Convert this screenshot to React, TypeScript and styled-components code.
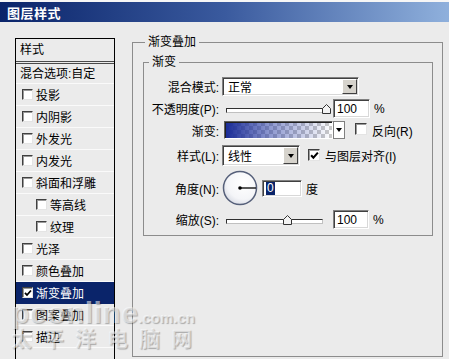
import React from 'react';
import styled, { createGlobalStyle } from 'styled-components';

const GlobalStyle = createGlobalStyle`
  html, body {
    margin: 0;
    padding: 0;
  }
  body {
    background: #ebebeb;
    font-family: "Liberation Sans", "Noto Sans CJK SC", sans-serif;
    font-size: 12px;
    color: #000;
    overflow: hidden;
  }
`;

const Window = styled.div`
  position: relative;
  width: 449px;
  height: 359px;
  box-sizing: border-box;
  background: #ebebeb;
  border-top: 2px solid #f6f6f6;
  overflow: hidden;
`;

const TitleBar = styled.div`
  height: 20px;
  display: flex;
  align-items: center;
  padding-left: 7px;
  background: linear-gradient(90deg, #0a246a 0%, #3a5a9e 50%, #8fb0dc 100%);
  color: #fff;
  font-weight: bold;
  font-size: 13px;
  letter-spacing: 0.5px;
`;

const Body = styled.div`
  display: flex;
  align-items: flex-start;
  gap: 17px;
  padding: 13px 6px 0 15px;
`;

const StyleList = styled.div`
  width: 100px;
  height: 330px;
  margin-top: 3px;
  box-sizing: border-box;
  border: 1px solid #000;
  border-bottom: none;
  flex-shrink: 0;
`;

const ListHeader = styled.div`
  height: 22px;
  line-height: 22px;
  padding-left: 4px;
  border-bottom: 3px double #4a4a4a;
`;

const BlendRow = styled.div`
  height: 20px;
  line-height: 20px;
  padding-left: 4px;
  box-sizing: border-box;
  border-bottom: 1px solid #fafafa;
`;

const ListItem = styled.div<{ $indent?: boolean; $selected?: boolean }>`
  height: 22px;
  box-sizing: border-box;
  display: flex;
  align-items: center;
  gap: 3px;
  padding-left: ${({ $indent }) => ($indent ? '20px' : '6px')};
  background: ${({ $selected }) => ($selected ? '#0a246a' : 'transparent')};
  color: ${({ $selected }) => ($selected ? '#fff' : '#000')};
  border-bottom: 1px solid ${({ $selected }) => ($selected ? '#0a246a' : '#fafafa')};
`;

const Box = styled.span<{ $size: number }>`
  width: ${({ $size }) => $size}px;
  height: ${({ $size }) => $size}px;
  box-sizing: border-box;
  flex-shrink: 0;
  display: inline-flex;
  align-items: center;
  justify-content: center;
  background: #fff;
  border: 1px solid;
  border-color: #404040 #e4e4e4 #e4e4e4 #404040;
  box-shadow: inset 1px 1px 0 #9a9a9a;
`;

const Checkbox: React.FC<{ checked?: boolean; size?: number }> = ({ checked, size = 11 }) => (
  <Box $size={size}>
    {checked && (
      <svg width={size - 3} height={size - 3} viewBox="0 0 8 8">
        <path d="M1 3.8 L3 6 L7 1.5" fill="none" stroke="#000" strokeWidth="1.8" />
      </svg>
    )}
  </Box>
);

const OuterGroup = styled.fieldset`
  margin: 0;
  width: 311px;
  height: 322px;
  min-width: 0;
  box-sizing: border-box;
  padding: 6px 9px 0 10px;
  border: 1px solid #8c8c8c;
`;

const Legend = styled.legend<{ $offset: number }>`
  padding: 0 3px;
  margin-left: ${({ $offset }) => $offset}px;
  line-height: 14px;
  font-size: 12px;
`;

const InnerGroup = styled.fieldset`
  margin: 0;
  width: 290px;
  min-width: 0;
  box-sizing: border-box;
  padding: 8px 0 6px 0;
  border: 1px solid #8c8c8c;
`;

const FormRow = styled.div<{ $h: number; $mt?: number }>`
  display: flex;
  align-items: center;
  height: ${({ $h }) => $h}px;
  margin-top: ${({ $mt }) => $mt ?? 0}px;
`;

const Label = styled.span`
  width: 75px;
  flex-shrink: 0;
  text-align: right;
  white-space: nowrap;
`;

const Sunken = styled.div<{ $w: number; $h: number; $ml: number }>`
  width: ${({ $w }) => $w}px;
  height: ${({ $h }) => $h}px;
  margin-left: ${({ $ml }) => $ml}px;
  box-sizing: border-box;
  flex-shrink: 0;
  display: flex;
  align-items: center;
  background: #fff;
  border: 1px solid;
  border-color: #808080 #fff #fff #808080;
  box-shadow: inset 1px 1px 0 #404040, inset -1px -1px 0 #d8d8d8;
`;

const SelectText = styled.span`
  padding-left: 5px;
`;

const DropButton = styled.span<{ $h: number }>`
  margin-left: auto;
  margin-right: 1px;
  width: 15px;
  height: ${({ $h }) => $h}px;
  box-sizing: border-box;
  display: flex;
  align-items: center;
  justify-content: center;
  background: #d6d3cc;
  border: 1px solid;
  border-color: #fff #404040 #404040 #fff;
`;

const Arrow = styled.span`
  width: 0;
  height: 0;
  border-left: 3.5px solid transparent;
  border-right: 3.5px solid transparent;
  border-top: 4px solid #000;
`;

const Slider = styled.div<{ $w: number; $ml: number }>`
  position: relative;
  width: ${({ $w }) => $w}px;
  height: 11px;
  margin-left: ${({ $ml }) => $ml}px;
  flex-shrink: 0;
  display: flex;
  align-items: flex-end;
`;

const Track = styled.div`
  width: 100%;
  height: 5px;
  margin-bottom: 1px;
  box-sizing: border-box;
  background: #fff;
  border: 1px solid;
  border-color: #303030 #c0c0c0 #c0c0c0 #303030;
`;

const Thumb = styled.svg`
  position: absolute;
  bottom: 0;
`;

const NumberField = styled(Sunken)`
  padding-left: 3px;
  font-size: 12px;
`;

const Unit = styled.span<{ $ml?: number }>`
  margin-left: ${({ $ml }) => $ml ?? 4}px;
`;

const GradientBar = styled.div`
  width: 109px;
  height: 18px;
  margin-left: 5px;
  box-sizing: border-box;
  flex-shrink: 0;
  border: 1px solid;
  border-color: #606060 #fff #fff #606060;
  box-shadow: inset 1px 1px 0 #202020;
  background:
    linear-gradient(90deg, rgba(24, 42, 150, 1) 0%, rgba(40, 60, 165, 0.55) 40%, rgba(60, 80, 180, 0) 100%),
    repeating-conic-gradient(#c9c9c9 0% 25%, #fff 0% 50%) 0 0 / 8px 8px;
`;

const GradientDrop = styled.div`
  width: 12px;
  height: 18px;
  box-sizing: border-box;
  display: flex;
  align-items: center;
  justify-content: center;
  background: #fff;
  border: 1px solid #808080;
`;

const CheckText = styled.span<{ $ml: number }>`
  margin-left: ${({ $ml }) => $ml}px;
  white-space: nowrap;
`;

const Dial = styled.svg`
  margin-left: 3px;
  flex-shrink: 0;
`;

const Selected = styled.span`
  background: #0a246a;
  color: #fff;
  padding: 0 1px;
  line-height: 13px;
`;

const Watermark = styled.div`
  position: absolute;
  left: 11px;
  top: 296px;
  pointer-events: none;
  color: rgba(255, 255, 255, 0.55);
  text-shadow: 1px 1px 1px rgba(0, 0, 0, 0.28);
  font-family: "Liberation Sans", "Noto Sans CJK SC", sans-serif;
  font-weight: bold;
  line-height: 1;
`;

const WatermarkLine = styled.div<{ $size: number; $spacing: number }>`
  display: flex;
  align-items: baseline;
  font-size: ${({ $size }) => $size}px;
  letter-spacing: ${({ $spacing }) => $spacing}px;
  white-space: nowrap;
`;

const WatermarkSmall = styled.span`
  font-size: 15px;
  letter-spacing: 0;
`;

const items: { label: string; indent?: boolean; checked?: boolean; selected?: boolean }[] = [
  { label: '投影' },
  { label: '内阴影' },
  { label: '外发光' },
  { label: '内发光' },
  { label: '斜面和浮雕' },
  { label: '等高线', indent: true },
  { label: '纹理', indent: true },
  { label: '光泽' },
  { label: '颜色叠加' },
  { label: '渐变叠加', checked: true, selected: true },
  { label: '图案叠加' },
  { label: '描边' },
];

const ThumbShape: React.FC<{ left: number }> = ({ left }) => (
  <Thumb width="9" height="10" viewBox="0 0 9 10" style={{ left }}>
    <polygon points="0.5,9.5 0.5,4.5 4.5,0.5 8.5,4.5 8.5,9.5" fill="#f2f2f2" stroke="#333" strokeWidth="1" />
  </Thumb>
);

const App: React.FC = () => {
  return (
    <>
      <GlobalStyle />
      <Window>
        <TitleBar>图层样式</TitleBar>
        <Body>
          <StyleList>
            <ListHeader>样式</ListHeader>
            <BlendRow>混合选项:自定</BlendRow>
            {items.map((it) => (
              <ListItem key={it.label} $indent={it.indent} $selected={it.selected}>
                <Checkbox checked={it.checked} />
                <span>{it.label}</span>
              </ListItem>
            ))}
          </StyleList>

          <OuterGroup>
            <Legend $offset={2}>渐变叠加</Legend>
            <InnerGroup>
              <Legend $offset={5}>渐变</Legend>

              <FormRow $h={19}>
                <Label>混合模式:</Label>
                <Sunken $w={137} $h={19} $ml={3}>
                  <SelectText>正常</SelectText>
                  <DropButton $h={15}>
                    <Arrow />
                  </DropButton>
                </Sunken>
              </FormRow>

              <FormRow $h={19} $mt={3}>
                <Label>不透明度(P):</Label>
                <Slider $w={102} $ml={7}>
                  <Track />
                  <ThumbShape left={96} />
                </Slider>
                <NumberField $w={37} $h={19} $ml={5}>100</NumberField>
                <Unit>%</Unit>
              </FormRow>

              <FormRow $h={18} $mt={3}>
                <Label>渐变:</Label>
                <GradientBar />
                <GradientDrop>
                  <Arrow />
                </GradientDrop>
                <CheckText $ml={10}>
                  <Checkbox size={12} />
                </CheckText>
                <CheckText $ml={5}>反向(R)</CheckText>
              </FormRow>

              <FormRow $h={21} $mt={6}>
                <Label>样式(L):</Label>
                <Sunken $w={78} $h={21} $ml={3}>
                  <SelectText>线性</SelectText>
                  <DropButton $h={17}>
                    <Arrow />
                  </DropButton>
                </Sunken>
                <CheckText $ml={8}>
                  <Checkbox size={12} checked />
                </CheckText>
                <CheckText $ml={5}>与图层对齐(I)</CheckText>
              </FormRow>

              <FormRow $h={34} $mt={5}>
                <Label>角度(N):</Label>
                <Dial width="36" height="36" viewBox="0 0 36 36">
                  <defs>
                    <radialGradient id="dialFill" cx="0.6" cy="0.35" r="0.7">
                      <stop offset="0" stopColor="#ffffff" />
                      <stop offset="0.7" stopColor="#f4f5f8" />
                      <stop offset="1" stopColor="#d8dbe4" />
                    </radialGradient>
                  </defs>
                  <circle cx="18" cy="18" r="16.5" fill="url(#dialFill)" stroke="#56607a" strokeWidth="1.5" />
                  <line x1="18" y1="18" x2="34" y2="18" stroke="#000" strokeWidth="1.3" />
                  <circle cx="18" cy="18" r="1.8" fill="#000" />
                </Dial>
                <NumberField $w={40} $h={17} $ml={4}>
                  <Selected>0</Selected>
                </NumberField>
                <Unit>度</Unit>
              </FormRow>

              <FormRow $h={19} $mt={5}>
                <Label>缩放(S):</Label>
                <Slider $w={97} $ml={7}>
                  <Track />
                  <ThumbShape left={57} />
                </Slider>
                <NumberField $w={36} $h={19} $ml={10}>100</NumberField>
                <Unit>%</Unit>
              </FormRow>
            </InnerGroup>
          </OuterGroup>
        </Body>

        <Watermark>
          <WatermarkLine $size={30} $spacing={0.5}>
            pconline<WatermarkSmall>.com.cn</WatermarkSmall>
          </WatermarkLine>
          <WatermarkLine $size={21} $spacing={11}>太平洋电脑网</WatermarkLine>
        </Watermark>
      </Window>
    </>
  );
};

export default App;
